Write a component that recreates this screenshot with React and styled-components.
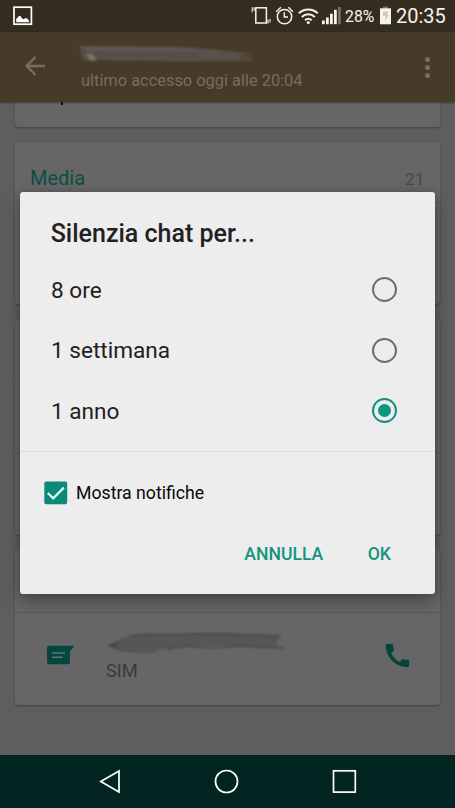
import React, { useState } from "react";
import styled, { createGlobalStyle } from "styled-components";
import { MdCall } from "react-icons/md";

const GlobalStyle = createGlobalStyle`
  * {
    box-sizing: border-box;
  }
  body {
    margin: 0;
    background: #5e5e5e;
    font-family: Roboto, "Liberation Sans", sans-serif;
  }
  button {
    font-family: inherit;
    border: 0;
    padding: 0;
    background: none;
  }
`;

const Phone = styled.div`
  position: relative;
  display: flex;
  flex-direction: column;
  width: 455px;
  height: 808px;
  overflow: hidden;
  background: #5e5e5e;
`;

const StatusBar = styled.header`
  display: flex;
  justify-content: space-between;
  flex: 0 0 32px;
  height: 32px;
  min-height: 0;
  padding-left: 13px;
  background: #352c20;
  color: #f6f3ea;
`;

const StatusRight = styled.div`
  display: flex;
  width: 207px;
  height: 32px;

  svg {
    flex: none;
  }
`;

const Battery = styled.span`
  flex: none;
  width: 36px;
  padding: 1px 0 0 4px;
  font-size: 15.8px;
  line-height: 31px;
`;

const Clock = styled.span`
  font-size: 20px;
  line-height: 33px;
  margin-left: 2px;
`;

const AppBar = styled.div`
  display: flex;
  flex: 0 0 70px;
  background: #463b28;
  color: #746d65;
  box-shadow: 0 1px 2px rgba(0, 0, 0, 0.35);
  z-index: 1;
`;

const BackButton = styled.button`
  width: 78px;
  height: 70px;
  padding: 1px 8px 0 0;
  color: inherit;
`;

const Contact = styled.div`
  flex: 1;
`;

const LastSeen = styled.div`
  padding-left: 3px;
  margin-top: -1px;
  font-size: 16.4px;
  line-height: 20px;
  white-space: nowrap;
`;

const MoreButton = styled.button`
  display: flex;
  flex-direction: column;
  align-items: center;
  gap: 3px;
  width: 56px;
  padding-top: 25px;
`;

const Dot = styled.span`
  width: 5px;
  height: 5px;
  border-radius: 50%;
  background: #77716a;
`;

const Content = styled.main`
  display: flex;
  flex-direction: column;
  gap: 15px;
  flex: 1;
  padding: 0 15px;
`;

const Card = styled.section`
  height: ${(props) => props.$height}px;
  background: #666;
  border-radius: ${(props) => (props.$first ? "0 0 3px 3px" : "3px")};
  box-shadow: 0 1px 2px rgba(0, 0, 0, 0.3);
`;

const Descender = styled.div`
  width: 2px;
  height: 3px;
  margin-left: 46px;
  background: #111;
`;

const CardRow = styled.div`
  display: flex;
  height: ${(props) => props.$height}px;
  border-bottom: 1px solid ${(props) => (props.$last ? "transparent" : "#5b5b5b")};
`;

const MediaTitle = styled.h2`
  flex: 1;
  margin: 0;
  padding: 25px 0 0 15px;
  font-size: 20px;
  font-weight: 400;
  line-height: 22px;
  color: #0b4f44;
`;

const MediaCount = styled.span`
  padding: 26px 15.5px 0 0;
  font-size: 17.3px;
  line-height: 22px;
  color: #484848;
`;

const MessageSlot = styled.div`
  width: 88px;
  padding: 32px 0 0 31px;
  line-height: 0;
`;

const Number = styled.div`
  flex: 1;
  padding-top: 18px;
`;

const Sim = styled.div`
  padding-left: 3px;
  margin-top: -1px;
  font-size: 18.3px;
  line-height: 22px;
  color: #3a3a3a;
`;

const CallSlot = styled.div`
  width: 58px;
  padding-top: 26.5px;
  color: #05443b;
  line-height: 0;
`;

const NavBar = styled.nav`
  display: flex;
  justify-content: center;
  gap: 93px;
  flex: 0 0 53px;
  padding: 14px 2px 0 0;
  background: #032522;
`;

const Dialog = styled.div`
  position: absolute;
  left: 20px;
  top: 192px;
  width: 415px;
  height: 402px;
  border-radius: 3px;
  background: #ededed;
  color: #212121;
  box-shadow: 0 7px 17px rgba(0, 0, 0, 0.32), 0 0 5px rgba(0, 0, 0, 0.15);
`;

const DialogTitle = styled.h1`
  margin: 0;
  padding: 23px 0 6px 30.7px;
  font-size: 25px;
  font-weight: 500;
  line-height: 38px;
`;

const Options = styled.div`
  padding-bottom: 10px;
  border-bottom: 1.5px solid #dcdcdc;
`;

const Option = styled.div`
  display: flex;
  align-items: center;
  justify-content: space-between;
  height: 60.6px;
  padding: 0 38px 0 31px;
  font-size: 22.6px;
`;

const OptionLabel = styled.span`
  padding-top: 2px;
`;

const Radio = styled.span`
  display: grid;
  place-items: center;
  width: 25px;
  height: 25px;
  margin-top: 1px;
  border: 2px solid ${(props) => (props.$on ? "#159080" : "#6e6e6e")};
  border-radius: 50%;

  &::after {
    content: "";
    width: 13px;
    height: 13px;
    border-radius: 50%;
    background: ${(props) => (props.$on ? "#0d9482" : "transparent")};
  }
`;

const NotifyRow = styled.div`
  display: flex;
  align-items: center;
  gap: 8px;
  height: 83px;
  padding-left: 24px;
  font-size: 17.7px;
  color: #080808;
`;

const Actions = styled.div`
  display: flex;
  justify-content: flex-end;
  gap: 44.5px;
  padding: 8px 44px 0 0;
`;

const Action = styled.button`
  font-size: 17.6px;
  font-weight: 500;
  line-height: 22px;
  color: #15937f;
`;

const PictureIcon = () => (
  <svg width="20" height="32" viewBox="0 0 20 32">
    <rect x="1" y="7.2" width="17.4" height="17" fill="none" stroke="#fff" strokeWidth="1.7" />
    <path d="M3.2 22.3v-3.6l1.6-1.2 1-1.6h1.6l1.6 2.4 1.3 1 1.8-1.1h1.6l1.3 1.1 1.1 2v1z" fill="#fff" />
  </svg>
);

const StatusIcons = () => (
  <svg width="93" height="32" viewBox="0 0 93 32" fill="none" stroke="#f6f3ea" strokeWidth="1.5">
    {/* vibrate */}
    <rect x="7.8" y="7.8" width="10.6" height="15.2" />
    <path d="M4.2 7.2v5M6.1 7.2v3.5M20 19.5v4M22 19v3.6" strokeWidth="1.1" />
    {/* alarm */}
    <circle cx="36.5" cy="16.6" r="7.2" />
    <path d="M36.3 12.3v4.7h3.7M28.2 11.7l4.7-4.4M40.3 7.3l4.7 4.4" strokeWidth="1.4" />
    {/* wifi */}
    <path d="M50.8 13.4c5.4-5.2 13.6-5.2 19 0M53.8 17c3.8-3.6 9.2-3.6 13 0M57 20.3c2-1.8 4.7-1.8 6.7 0" strokeWidth="2" />
    <circle cx="60.3" cy="22.5" r="1.6" fill="#f6f3ea" stroke="none" />
    {/* signal */}
    <g stroke="none" fill="#f6f3ea">
      <rect x="74" y="20.5" width="2.8" height="3.7" />
      <rect x="78" y="17.5" width="2.8" height="6.7" />
      <rect x="82" y="13.7" width="2.8" height="10.5" />
      <rect x="86" y="9.8" width="2.8" height="14.4" />
      <rect x="90" y="7" width="2.8" height="17.2" fill="#777068" />
    </g>
  </svg>
);

const BatteryIcon = () => (
  <svg width="17" height="32" viewBox="0 0 17 32">
    <rect x="6" y="6.5" width="5" height="3" fill="#777068" />
    <rect x="3" y="8.3" width="11" height="16" fill="#f6f3ea" />
    <path d="M6.5 11.5h5l-1.2 3.5h1.7L7.8 20.5l.9-4.2-3-.8z" fill="#cbc8c1" />
  </svg>
);

const BackArrow = () => (
  <svg width="24" height="24" viewBox="0 0 24 24" fill="none" stroke="currentColor" strokeWidth="2.4">
    <path d="M22 12H4M12.5 3.2L3.6 12l8.9 8.8" />
  </svg>
);

const NameSmear = () => (
  <svg width="185" height="40" viewBox="0 0 185 40" style={{ display: "block" }}>
    <defs>
      <filter id="soft" x="-5%" y="-30%" width="110%" height="160%">
        <feGaussianBlur stdDeviation="1.1" />
      </filter>
    </defs>
    <g filter="url(#soft)">
      <path d="M1 14l104 1 35 3 25 4-5 4 6 2-55 1-45-1-22 0-20 0-9-1-5 2-5-1z" fill="#565049" />
      <path d="M1 14l104 2 52 4-54-1-93 0z" fill="#5d5952" />
      <path d="M8 22l5 7 6-1-5-6z" fill="#79746d" />
      <path d="M32 28c30-2 50 1 90 0M125 19c20 0 35 2 50 4M120 23c20 0 35 2 53 3M125 28h49" fill="none" stroke="#625c55" strokeWidth="1.1" />
    </g>
  </svg>
);

const NumberSmear = () => (
  <svg width="184" height="30" viewBox="0 0 184 30" style={{ display: "block" }}>
    <defs>
      <filter id="soft2" x="-5%" y="-30%" width="110%" height="160%">
        <feGaussianBlur stdDeviation="0.8" />
      </filter>
    </defs>
    <g filter="url(#soft2)">
      <path d="M5 15l14-8 20-3 45-1 92 2-2 6 2 6-35-2-35 0-25 0-25 4-28 1-17-3z" fill="#585754" />
      <path d="M26 5c20-3 40 0 60-2s60 2 92 2" fill="none" stroke="#3d3d3d" strokeWidth="1.2" />
      <path d="M5 14l13 5 20 2 16-1M64 18l20-3 25 2 30-2 42 2" fill="none" stroke="#3d3d3d" strokeWidth="1.2" />
      <path d="M5 14l12-4-6 7z" fill="#444" />
    </g>
  </svg>
);

const MessageIcon = () => (
  <svg width="29" height="21" viewBox="0 0 29 21">
    <path d="M3 .8h25.5L24 6.2v10.6q0 2.5-2.5 2.5H3.5Q1 19.3 1 16.8V3q0-2.2 2-2.2z" fill="#04473e" />
    <path d="M6 8h13M6 12.2h10.5" stroke="#5d7772" strokeWidth="1.6" />
  </svg>
);

const CheckBox = () => (
  <svg width="24" height="24" viewBox="0 0 24 24">
    <rect x=".3" y=".5" width="22.9" height="22.8" rx="2" fill="#0d8979" />
    <path d="M3.8 12l5.4 5.3L19.8 6.6" fill="none" stroke="#d9fff6" strokeWidth="2.3" />
  </svg>
);

const options = ["8 ore", "1 settimana", "1 anno"];

const App = () => {
  const [selected, setSelected] = useState("1 anno");

  return (
    <Phone>
      <GlobalStyle />
      <StatusBar>
        <PictureIcon />
        <StatusRight>
          <StatusIcons />
          <Battery>28%</Battery>
          <BatteryIcon />
          <Clock>20:35</Clock>
        </StatusRight>
      </StatusBar>
      <AppBar>
        <BackButton>
          <BackArrow />
        </BackButton>
        <Contact>
          <NameSmear />
          <LastSeen>ultimo accesso oggi alle 20:04</LastSeen>
        </Contact>
        <MoreButton>
          <Dot />
          <Dot />
          <Dot />
        </MoreButton>
      </AppBar>
      <Content>
        <Card $height={25} $first>
          <Descender />
        </Card>
        <Card $height={162}>
          <CardRow $height={61}>
            <MediaTitle>Media</MediaTitle>
            <MediaCount>21</MediaCount>
          </CardRow>
        </Card>
        <Card $height={216}>
          <CardRow $height={61} />
          <CardRow $height={74} />
        </Card>
        <Card $height={155}>
          <CardRow $height={63} />
          <CardRow $height={92} $last>
            <MessageSlot>
              <MessageIcon />
            </MessageSlot>
            <Number>
              <NumberSmear />
              <Sim>SIM</Sim>
            </Number>
            <CallSlot>
              <MdCall size={31} />
            </CallSlot>
          </CardRow>
        </Card>
      </Content>
      <NavBar>
        <svg width="25" height="25" viewBox="0 0 25 25" fill="none" stroke="#fff" strokeWidth="1.7">
          <path d="M23 2v21L4.8 12.5z" />
        </svg>
        <svg width="25" height="25" viewBox="0 0 25 25" fill="none" stroke="#fff" strokeWidth="1.7">
          <circle cx="12.5" cy="12.5" r="11" />
        </svg>
        <svg width="25" height="25" viewBox="0 0 25 25" fill="none" stroke="#fff" strokeWidth="1.7">
          <rect x="1.5" y="1.8" width="21.8" height="21.3" />
        </svg>
      </NavBar>
      <Dialog>
        <DialogTitle>Silenzia chat per...</DialogTitle>
        <Options>
          {options.map((label) => (
            <Option key={label} onClick={() => setSelected(label)}>
              <OptionLabel>{label}</OptionLabel>
              <Radio $on={selected === label} />
            </Option>
          ))}
        </Options>
        <NotifyRow>
          <CheckBox />
          Mostra notifiche
        </NotifyRow>
        <Actions>
          <Action>ANNULLA</Action>
          <Action>OK</Action>
        </Actions>
      </Dialog>
    </Phone>
  );
};

export default App;
